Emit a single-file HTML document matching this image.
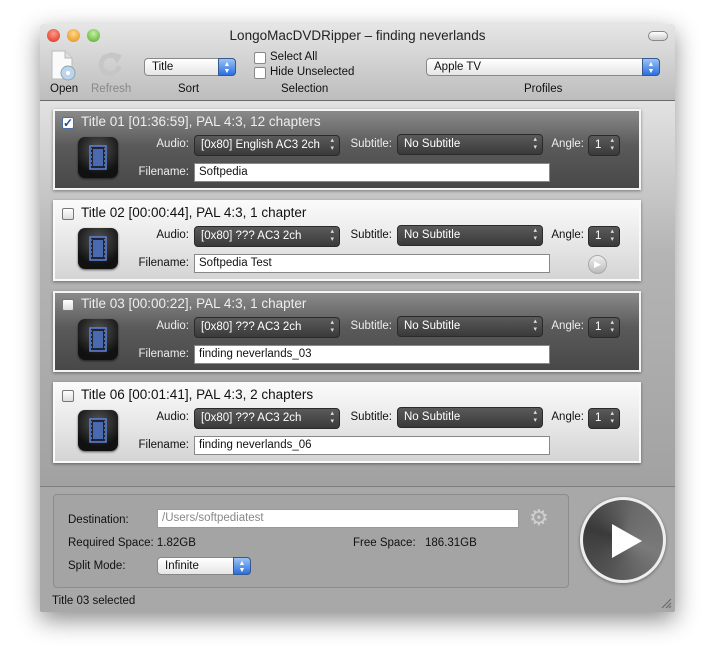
<!DOCTYPE html>
<html><head><meta charset="utf-8"><style>
*{box-sizing:border-box;margin:0;padding:0}
body{width:716px;height:667px;background:#fff;font-family:"Liberation Sans",sans-serif;position:relative;overflow:hidden;font-size:11px;color:#111}
.a{position:absolute}
#win{left:40px;top:24px;width:635px;height:588px;background:#a8a8a8;box-shadow:0 8px 24px rgba(0,0,0,.45);border-radius:5px 5px 2px 2px;overflow:hidden}
#tb{left:0;top:0;width:635px;height:77px;background:linear-gradient(#e6e6e6,#bdbdbd);border-bottom:1px solid #6a6a6a}
.light{width:13px;height:13px;border-radius:50%;top:5px}
#content{left:0;top:77px;width:635px;height:386px;background:linear-gradient(#e2e2e2,#b4b4b4 40%,#a2a2a2);border-bottom:1px solid #7e7e7e}
.panel{left:13px;width:588px;height:81px;border:2px solid #f4f4f4;box-shadow:0 1px 3px rgba(0,0,0,.4)}
.dark{background:linear-gradient(#8a8a8a,#5a5a5a 45%,#484848);color:#eee}
.lt{background:linear-gradient(#fafafa,#e8e8e8 50%,#d4d4d4);border-color:#fafafa;color:#111}
.ttl{left:26px;top:3px;font-size:13.5px;white-space:nowrap}
.cb{left:7px;top:6px;width:12px;height:12px;border:1px solid #777;border-radius:2px;background:linear-gradient(#fff,#ddd)}
.icon{width:40px;height:41px;border-radius:7px;background:radial-gradient(circle at 50% 30%,#555,#111 70%);box-shadow:0 1px 2px rgba(0,0,0,.6)}
.lbl{font-size:11.5px;white-space:nowrap;text-align:right}
.pop{height:21px;border-radius:4px;background:linear-gradient(#5a5a5a,#3a3a3a);border:1px solid #2a2a2a;color:#fff;font-size:11.5px;padding:3px 6px;white-space:nowrap;overflow:hidden}
.pop:after{content:"\25B4\A\25BE";white-space:pre;position:absolute;right:5px;top:1px;font-size:7px;line-height:8px;color:#ddd}
.aqua{height:18px;border-radius:4px;background:linear-gradient(#fff,#e6e6e6);border:1px solid #888;font-size:11.5px;padding:2px 7px}
.aqua i{position:absolute;right:-1px;top:-1px;width:18px;height:18px;border-radius:0 4px 4px 0;background:linear-gradient(#9cc4f5,#2a6ee0);border:1px solid #35598f;color:#fff;font-style:normal;font-size:7px;line-height:7px;text-align:center;padding-top:2px}
</style></head><body>
<div id="win" class="a">
 <div id="tb" class="a">
  <div class="a light" style="left:7px;background:radial-gradient(circle at 50% 35%,#ff9a8a,#d62a1a)"></div>
  <div class="a light" style="left:27px;background:radial-gradient(circle at 50% 35%,#ffd88a,#e08a10)"></div>
  <div class="a light" style="left:47px;background:radial-gradient(circle at 50% 35%,#c8f0a0,#4ca82a)"></div>
  <div class="a" style="left:0;width:635px;top:4px;text-align:center;font-size:13.5px;color:#222">LongoMacDVDRipper – finding neverlands</div>
  <div class="a" style="left:608px;top:7px;width:20px;height:10px;border:1px solid #888;border-radius:6px;background:linear-gradient(#fff,#ccc)"></div>
  <svg class="a" style="left:10px;top:26px" width="28" height="32"><path d="M2 1h13l7 7v21H2z" fill="#fafafa" stroke="#bbb"/><path d="M15 1v7h7" fill="#ddd" stroke="#bbb"/><circle cx="18" cy="23" r="7" fill="#bcd4ee" stroke="#8aa"/><circle cx="18" cy="23" r="2" fill="#fff"/></svg>
  <svg class="a" style="left:57px;top:28px" width="28" height="28"><path d="M22 14a9 9 0 1 1-4-9" fill="none" stroke="#c6c6c6" stroke-width="5"/><path d="M13 0l12 3-5 9z" fill="#c6c6c6"/></svg>
  <div class="a" style="left:10px;top:59px;font-size:11.5px">Open</div>
  <div class="a" style="left:51px;top:59px;font-size:11.5px;color:#888">Refresh</div>
  <div class="a aqua" style="left:104px;top:34px;width:92px">Title<i>▲<br>▼</i></div>
  <div class="a" style="left:138px;top:59px;font-size:11.5px">Sort</div>
  <div class="a" style="left:214px;top:28px;width:12px;height:12px;border:1px solid #888;border-radius:2px;background:#fff"></div>
  <div class="a" style="left:214px;top:43px;width:12px;height:12px;border:1px solid #888;border-radius:2px;background:#fff"></div>
  <div class="a" style="left:230px;top:27px;font-size:11.5px">Select All</div>
  <div class="a" style="left:230px;top:42px;font-size:11.5px">Hide Unselected</div>
  <div class="a" style="left:241px;top:59px;font-size:11.5px">Selection</div>
  <div class="a aqua" style="left:386px;top:34px;width:234px">Apple TV<i>▲<br>▼</i></div>
  <div class="a" style="left:484px;top:59px;font-size:11.5px">Profiles</div>
 </div>
 <div id="content" class="a"></div>

 <div class="a panel dark" style="top:85px">
  <div class="a cb" style="background:#fff;border-color:#4a6fa0;color:#1a4fa0;font-size:12px;line-height:10px;text-align:center;font-weight:bold">✓</div>
  <div class="a ttl">Title 01 [01:36:59], PAL 4:3, 12 chapters</div>
 </div>
 <div class="a panel lt" style="top:176px"><div class="a cb"></div><div class="a ttl">Title 02 [00:00:44], PAL 4:3, 1 chapter</div>
  <div class="a" style="left:533px;top:53px;width:19px;height:19px;border-radius:50%;background:linear-gradient(#eee,#bbb);border:1px solid #aaa;color:#fff;font-size:9px;text-align:center;line-height:17px">▶</div></div>
 <div class="a panel dark" style="top:267px"><div class="a cb"></div><div class="a ttl">Title 03 [00:00:22], PAL 4:3, 1 chapter</div></div>
 <div class="a panel lt" style="top:358px"><div class="a cb"></div><div class="a ttl">Title 06 [00:01:41], PAL 4:3, 2 chapters</div></div>

 <div id="rows"></div>

 <div class="a" style="left:13px;top:470px;width:516px;height:94px;border:1px solid #8c8c8c;border-radius:4px;background:#a4a4a4"></div>
 <div class="a" style="left:28px;top:490px;font-size:11.5px">Destination:</div>
 <div class="a" style="left:117px;top:485px;width:362px;height:19px;background:#fff;border:1px solid #999;color:#888;font-size:11.5px;padding:2px 4px">/Users/softpediatest</div>
 <div class="a" style="left:489px;top:481px;font-size:22px;color:#cfcfcf">⚙</div>
 <div class="a" style="left:28px;top:513px;font-size:11.5px">Required Space: 1.82GB</div>
 <div class="a" style="left:313px;top:513px;font-size:11.5px">Free Space:</div>
 <div class="a" style="left:385px;top:513px;font-size:11.5px">186.31GB</div>
 <div class="a" style="left:28px;top:536px;font-size:11.5px">Split Mode:</div>
 <div class="a aqua" style="left:117px;top:533px;width:94px">Infinite<i>▲<br>▼</i></div>
 <div class="a" style="left:540px;top:473px;width:86px;height:86px;border-radius:50%;background:conic-gradient(from 20deg,#6a6a6a,#7a7a7a 25%,#555 50%,#3a3a3a 75%,#6a6a6a);border:3px solid #eee;box-shadow:0 1px 3px rgba(0,0,0,.4)"></div>
 <svg class="a" style="left:571px;top:499px" width="32" height="36"><path d="M1 1L31 18L1 35z" fill="#fff"/></svg>
 <div class="a" style="left:12px;top:571px;font-size:11.5px">Title 03 selected</div>
 <svg class="a" style="left:620px;top:573px" width="12" height="12"><path d="M11 2L2 11M11 6L6 11M11 9L9 11" stroke="#666"/></svg>
</div>

<script>
var tops=[85,176,267,358],auds=["[0x80] English AC3 2ch","[0x80] ??? AC3 2ch","[0x80] ??? AC3 2ch","[0x80] ??? AC3 2ch"],
fn=["Softpedia","Softpedia Test","finding neverlands_03","finding neverlands_06"],dk=[1,0,1,0],h="";
for(var i=0;i<4;i++){var t=tops[i],c=dk[i]?"#eee":"#111";
h+='<div class="a icon" style="left:38px;top:'+(t+28)+'px"><svg style="position:absolute;left:11px;top:8px" width="18" height="25"><rect x="1" y="1" width="16" height="23" fill="#223" stroke="#5a86e0" stroke-width="1.5"/><rect x="4" y="4" width="10" height="17" fill="#4a6ab0"/><path d="M2 4h1M2 8h1M2 12h1M2 16h1M2 20h1M15 4h1M15 8h1M15 12h1M15 16h1M15 20h1" stroke="#9bd"/></svg></div>';
h+='<div class="a lbl" style="left:60px;width:89px;top:'+(t+29)+'px;color:'+c+'">Audio:</div>';
h+='<div class="a pop" style="left:154px;top:'+(t+26)+'px;width:146px">'+auds[i]+'</div>';
h+='<div class="a lbl" style="left:300px;width:52px;top:'+(t+29)+'px;color:'+c+'">Subtitle:</div>';
h+='<div class="a pop" style="left:357px;top:'+(t+25)+'px;width:146px">No Subtitle</div>';
h+='<div class="a lbl" style="left:500px;width:44px;top:'+(t+29)+'px;color:'+c+'">Angle:</div>';
h+='<div class="a pop" style="left:548px;top:'+(t+26)+'px;width:32px">1</div>';
h+='<div class="a lbl" style="left:60px;width:89px;top:'+(t+57)+'px;color:'+c+'">Filename:</div>';
h+='<div class="a" style="left:154px;top:'+(t+54)+'px;width:356px;height:19px;background:#fff;border:1px solid #888;font-size:11.5px;padding:2px 4px">'+fn[i]+'</div>';}
document.getElementById("rows").outerHTML=h;
</script>
</body></html>
